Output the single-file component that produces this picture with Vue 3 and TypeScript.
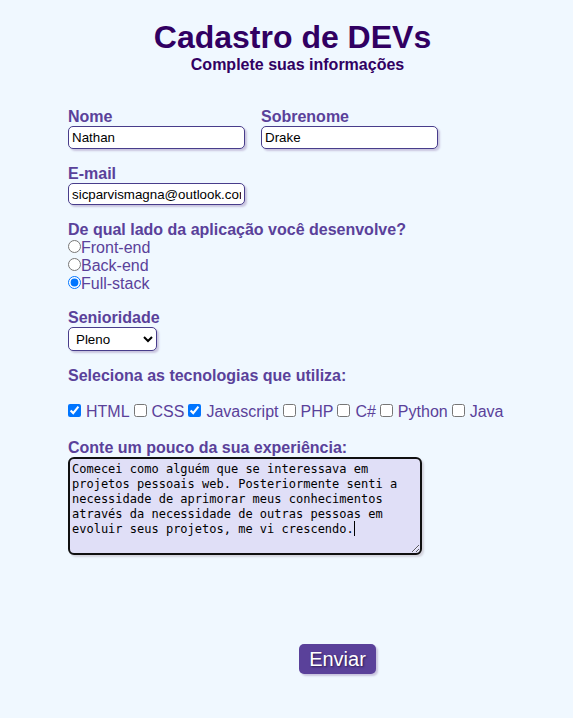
<script setup lang="ts">
import { onMounted, ref } from 'vue'

interface Choice {
  id: string
  label: string
}

const nome = ref('Nathan')
const sobrenome = ref('Drake')
const email = ref('sicparvismagna@outlook.com')
const lado = ref('fullstack')
const senioridade = ref('Pleno')
const tecnologias = ref<string[]>(['html', 'javascript'])
const experiencia = ref(
  'Comecei como alguém que se interessava em projetos pessoais web. Posteriormente senti a necessidade de aprimorar meus conhecimentos através da necessidade de outras pessoas em evoluir seus projetos, me vi crescendo.',
)

const lados: Choice[] = [
  { id: 'frontend', label: 'Front-end' },
  { id: 'backend', label: 'Back-end' },
  { id: 'fullstack', label: 'Full-stack' },
]

const niveis: string[] = ['Júnior', 'Pleno', 'Sênior']

const opcoes: Choice[] = [
  { id: 'html', label: 'HTML' },
  { id: 'css', label: 'CSS' },
  { id: 'javascript', label: 'Javascript' },
  { id: 'php', label: 'PHP' },
  { id: 'csharp', label: 'C#' },
  { id: 'python', label: 'Python' },
  { id: 'java', label: 'Java' },
]

const campo = ref<HTMLTextAreaElement | null>(null)
const intocado = ref(true)

onMounted(() => {
  const el = campo.value
  if (el) {
    el.focus({ preventScroll: true })
    el.setSelectionRange(el.value.length, el.value.length)
  }
})
</script>

<template>
  <main class="page">
    <header class="heading">
      <h1>Cadastro de DEVs</h1>
      <p>Complete suas informações</p>
    </header>

    <form class="form" @submit.prevent>
      <div class="row">
        <div class="field">
          <label class="title" for="nome">Nome</label>
          <input id="nome" v-model="nome" class="box" type="text" />
        </div>
        <div class="field">
          <label class="title" for="sobrenome">Sobrenome</label>
          <input id="sobrenome" v-model="sobrenome" class="box" type="text" />
        </div>
      </div>

      <div class="field">
        <label class="title" for="email">E-mail</label>
        <input id="email" v-model="email" class="box" type="email" />
      </div>

      <fieldset class="group">
        <legend class="title">De qual lado da aplicação você desenvolve?</legend>
        <label v-for="l in lados" :key="l.id" class="radio">
          <input v-model="lado" type="radio" name="lado" :value="l.id" />{{ l.label }}
        </label>
      </fieldset>

      <div class="field">
        <label class="title" for="senioridade">Senioridade</label>
        <select id="senioridade" v-model="senioridade" class="box select">
          <option v-for="n in niveis" :key="n">{{ n }}</option>
        </select>
      </div>

      <fieldset class="group">
        <legend class="title">Seleciona as tecnologias que utiliza:</legend>
        <div class="checks">
          <label v-for="o in opcoes" :key="o.id" class="check">
            <input v-model="tecnologias" type="checkbox" :value="o.id" />{{ o.label }}
          </label>
        </div>
      </fieldset>

      <div class="field">
        <label class="title" for="experiencia">Conte um pouco da sua experiência:</label>
        <div class="area-wrap">
          <textarea
            id="experiencia"
            ref="campo"
            v-model="experiencia"
            class="area"
            :class="{ 'area-initial': intocado }"
            rows="6"
            spellcheck="false"
            @keydown="intocado = false"
            @pointerdown="intocado = false"
            @blur="intocado = false"
          ></textarea>
          <span v-if="intocado" class="caret" aria-hidden="true"></span>
        </div>
      </div>

      <div class="actions">
        <button class="send" type="submit">Enviar</button>
      </div>
    </form>
  </main>
</template>

<style>
body {
  background: #f0f8ff;
}
</style>

<style scoped>
.page {
  padding: 18px 0 40px;
  color: #5a419a;
  font-family: "Liberation Sans", Arial, sans-serif;
  font-size: 16px;
  line-height: 18px;
}

.heading {
  padding-left: 12px;
  color: #310062;
  text-align: center;
}

.heading h1 {
  margin: 0;
  font-size: 32px;
  line-height: 38px;
}

.heading p {
  margin: 0;
  padding-left: 10px;
  font-weight: bold;
}

.form {
  display: flex;
  flex-direction: column;
  gap: 16px;
  padding: 34px 0 0 68px;
}

.row {
  display: flex;
  gap: 16px;
}

.field {
  display: flex;
  flex-direction: column;
  align-items: flex-start;
}

.title {
  padding: 0;
  font-weight: bold;
}

.box {
  box-sizing: border-box;
  width: 177px;
  height: 23px;
  padding: 1px 3px;
  border: 1px solid #483d8b;
  border-radius: 5px;
  background: #fff;
  color: #000;
  font-family: inherit;
  box-shadow: 2px 2px 2px #c9c5df;
}

#email {
  height: 22px;
}

.select {
  width: 89px;
  height: 24px;
}

.group {
  min-width: 0;
  margin: 0;
  padding: 0;
  border: 0;
}

.radio {
  display: flex;
  align-items: flex-start;
}

.radio input,
.check input {
  width: 13px;
  height: 13px;
  margin: 1px 0 0;
}

.checks {
  display: flex;
  flex-wrap: wrap;
  gap: 4px;
  padding: 18px 0 2px;
}

.check {
  display: flex;
  align-items: flex-start;
  gap: 5px;
}

.area-wrap {
  position: relative;
  display: flex;
}

.area {
  box-sizing: border-box;
  width: 354px;
  height: 98px;
  padding: 3px 2px 2px;
  border: 2px solid #101010;
  border-radius: 6px;
  outline: none;
  background: #e0dff7;
  color: #000;
  font-family: "DejaVu Sans Mono", monospace;
  font-size: 12px;
  line-height: 15px;
  box-shadow: 2px 2px 2px #d3d3dd;
}

.area-initial {
  caret-color: transparent;
}

.caret {
  position: absolute;
  top: 64px;
  left: 286px;
  width: 1px;
  height: 15px;
  background: #000;
  pointer-events: none;
}

.actions {
  display: flex;
  justify-content: center;
  padding: 73px 0 0 34px;
}

.send {
  height: 30px;
  padding: 0 10px;
  border: 0;
  border-radius: 5px;
  background: #5a419a;
  color: #fff;
  font-family: inherit;
  font-size: 20px;
  text-shadow: 1px 1px 2px #2b1a55;
  box-shadow: 2px 2px 2px #c9c5df;
}
</style>
